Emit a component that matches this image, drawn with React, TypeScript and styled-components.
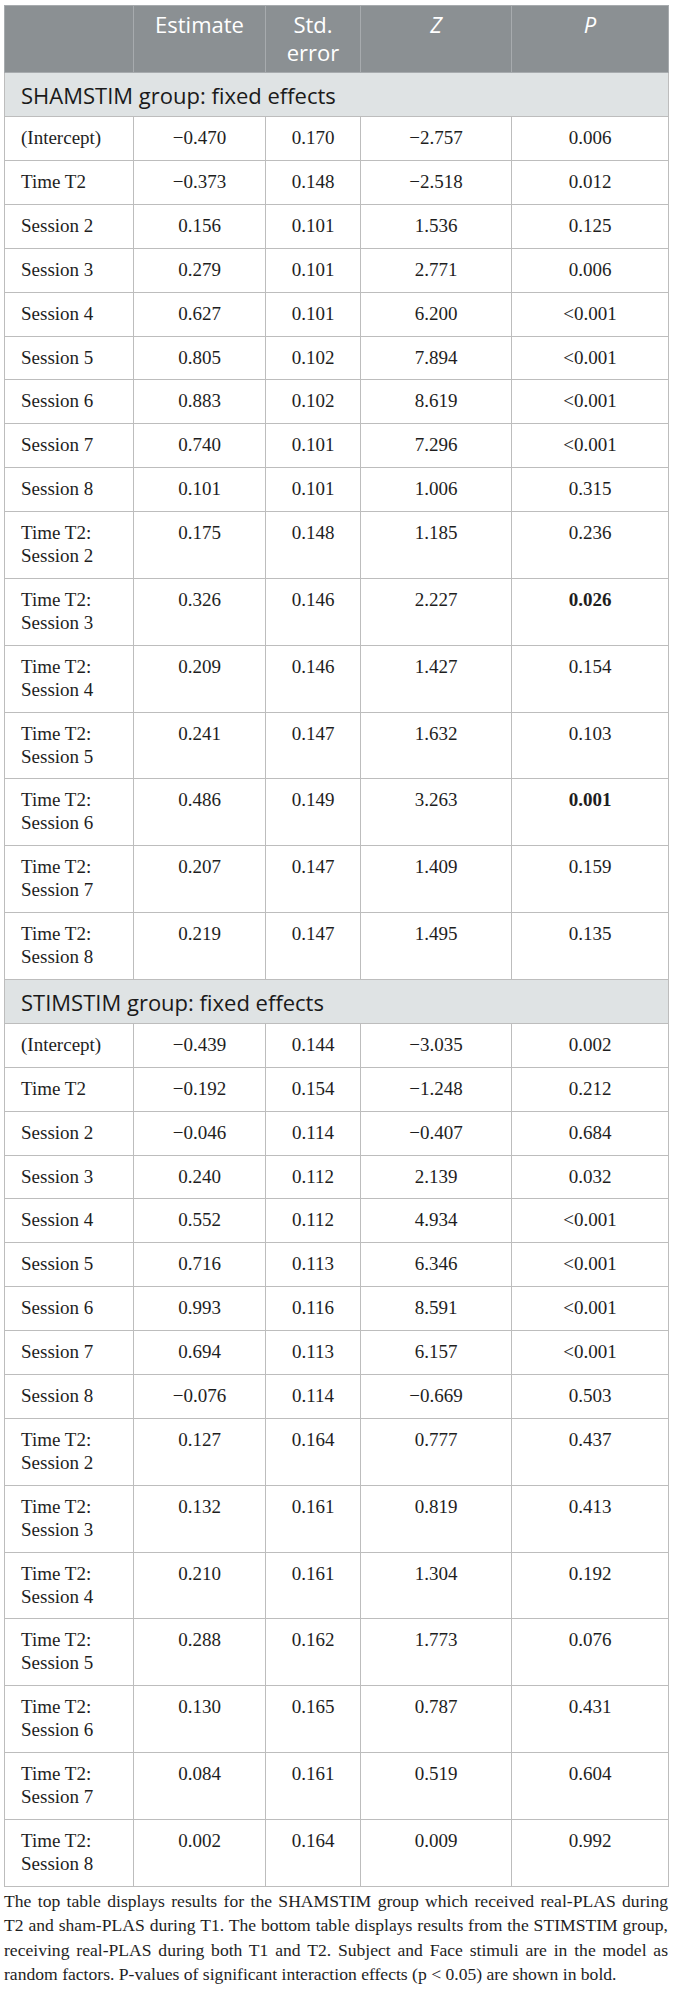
import React from "react";
import styled, { createGlobalStyle } from "styled-components";

const Global = createGlobalStyle`
  html, body { margin: 0; padding: 0; background: #ffffff; }
  body { font-family: "Liberation Serif", "Times New Roman", serif; }
`;

const Page = styled.div`
  padding: 5px 5px 0 4px;
`;

const Table = styled.table`
  width: 664px;
  table-layout: fixed;
  border-collapse: collapse;
  border: 1px solid #bdbdbd;
`;

const HeadCell = styled.th<{ $italic?: boolean }>`
  background: #8b9093;
  color: #ffffff;
  font-family: "Open Sans", "Noto Sans", sans-serif;
  font-weight: 400;
  font-size: 22px;
  line-height: 28px;
  font-style: ${(p) => (p.$italic ? "italic" : "normal")};
  text-align: center;
  vertical-align: top;
  padding: 4px 8px 2px;
  border: 1px solid #a7abae;
  height: 60px;
`;

const SectionCell = styled.td`
  background: #dfe3e4;
  color: #1a1a1a;
  font-family: "Open Sans", "Noto Sans", sans-serif;
  font-size: 22px;
  line-height: 28px;
  padding: 8px 16px 7px;
  border: 1px solid #bdbdbd;
  text-align: left;
`;

const Cell = styled.td<{ $label?: boolean; $bold?: boolean }>`
  font-family: "Liberation Serif", "Times New Roman", serif;
  font-size: 19px;
  line-height: 22.9px;
  color: #1e1e1e;
  padding: 10px ${(p) => (p.$label ? "6px 10px 16px" : "6px")};
  text-align: ${(p) => (p.$label ? "left" : "center")};
  font-weight: ${(p) => (p.$bold ? 700 : 400)};
  vertical-align: top;
  border: 1px solid #bdbdbd;
`;

const Caption = styled.div`
  width: 664px;
  margin: 2px 0 0;
  font-family: "Liberation Serif", "Times New Roman", serif;
  font-size: 17.6px;
  line-height: 24.6px;
  color: #1e1e1e;
`;

const CaptionLine = styled.span<{ $last?: boolean }>`
  display: block;
  white-space: nowrap;
  text-align: justify;
  text-align-last: ${(p) => (p.$last ? "left" : "justify")};
`;

type Row = [string, string, string, string, string, boolean?];

const sham: Row[] = [
  ["(Intercept)", "−0.470", "0.170", "−2.757", "0.006"],
  ["Time T2", "−0.373", "0.148", "−2.518", "0.012"],
  ["Session 2", "0.156", "0.101", "1.536", "0.125"],
  ["Session 3", "0.279", "0.101", "2.771", "0.006"],
  ["Session 4", "0.627", "0.101", "6.200", "<0.001"],
  ["Session 5", "0.805", "0.102", "7.894", "<0.001"],
  ["Session 6", "0.883", "0.102", "8.619", "<0.001"],
  ["Session 7", "0.740", "0.101", "7.296", "<0.001"],
  ["Session 8", "0.101", "0.101", "1.006", "0.315"],
  ["Time T2: Session 2", "0.175", "0.148", "1.185", "0.236"],
  ["Time T2: Session 3", "0.326", "0.146", "2.227", "0.026", true],
  ["Time T2: Session 4", "0.209", "0.146", "1.427", "0.154"],
  ["Time T2: Session 5", "0.241", "0.147", "1.632", "0.103"],
  ["Time T2: Session 6", "0.486", "0.149", "3.263", "0.001", true],
  ["Time T2: Session 7", "0.207", "0.147", "1.409", "0.159"],
  ["Time T2: Session 8", "0.219", "0.147", "1.495", "0.135"],
];

const stim: Row[] = [
  ["(Intercept)", "−0.439", "0.144", "−3.035", "0.002"],
  ["Time T2", "−0.192", "0.154", "−1.248", "0.212"],
  ["Session 2", "−0.046", "0.114", "−0.407", "0.684"],
  ["Session 3", "0.240", "0.112", "2.139", "0.032"],
  ["Session 4", "0.552", "0.112", "4.934", "<0.001"],
  ["Session 5", "0.716", "0.113", "6.346", "<0.001"],
  ["Session 6", "0.993", "0.116", "8.591", "<0.001"],
  ["Session 7", "0.694", "0.113", "6.157", "<0.001"],
  ["Session 8", "−0.076", "0.114", "−0.669", "0.503"],
  ["Time T2: Session 2", "0.127", "0.164", "0.777", "0.437"],
  ["Time T2: Session 3", "0.132", "0.161", "0.819", "0.413"],
  ["Time T2: Session 4", "0.210", "0.161", "1.304", "0.192"],
  ["Time T2: Session 5", "0.288", "0.162", "1.773", "0.076"],
  ["Time T2: Session 6", "0.130", "0.165", "0.787", "0.431"],
  ["Time T2: Session 7", "0.084", "0.161", "0.519", "0.604"],
  ["Time T2: Session 8", "0.002", "0.164", "0.009", "0.992"],
];

const captionLines = [
  "The top table displays results for the SHAMSTIM group which received real-PLAS during",
  "T2 and sham-PLAS during T1. The bottom table displays results from the STIMSTIM group,",
  "receiving real-PLAS during both T1 and T2. Subject and Face stimuli are in the model as",
  "random factors. P-values of significant interaction effects (p < 0.05) are shown in bold.",
];

function Label({ text }: { text: string }) {
  const idx = text.indexOf(": ");
  if (idx < 0) return <>{text}</>;
  return (
    <>
      {text.slice(0, idx + 1)}
      <br />
      {text.slice(idx + 2)}
    </>
  );
}

function Section({ title, rows }: { title: string; rows: Row[] }) {
  return (
    <>
      <tr>
        <SectionCell colSpan={5}>{title}</SectionCell>
      </tr>
      {rows.map((r, i) => (
        <tr key={i}>
          <Cell $label>
            <Label text={r[0]} />
          </Cell>
          <Cell>{r[1]}</Cell>
          <Cell>{r[2]}</Cell>
          <Cell>{r[3]}</Cell>
          <Cell $bold={!!r[5]}>{r[4]}</Cell>
        </tr>
      ))}
    </>
  );
}

export default function App() {
  return (
    <Page>
      <Global />
      <Table>
        <colgroup>
          <col style={{ width: 129 }} />
          <col style={{ width: 132 }} />
          <col style={{ width: 95 }} />
          <col style={{ width: 151 }} />
          <col style={{ width: 157 }} />
        </colgroup>
        <thead>
          <tr>
            <HeadCell />
            <HeadCell>Estimate</HeadCell>
            <HeadCell>
              Std.
              <br />
              error
            </HeadCell>
            <HeadCell $italic>Z</HeadCell>
            <HeadCell $italic>P</HeadCell>
          </tr>
        </thead>
        <tbody>
          <Section title="SHAMSTIM group: fixed effects" rows={sham} />
          <Section title="STIMSTIM group: fixed effects" rows={stim} />
        </tbody>
      </Table>
      <Caption>
        {captionLines.map((line, i) => (
          <CaptionLine key={i} $last={i === captionLines.length - 1}>
            {line}
          </CaptionLine>
        ))}
      </Caption>
    </Page>
  );
}
